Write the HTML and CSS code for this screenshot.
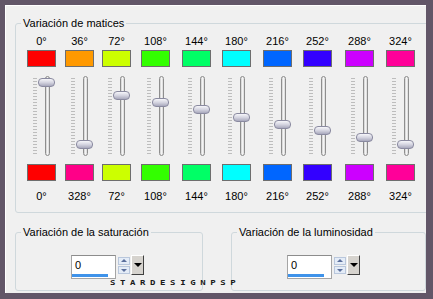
FILE: index.html
```html
<!DOCTYPE html>
<html lang="es">
<head>
  <meta charset="UTF-8">
  <title>Variación de matices</title>
  <link rel="stylesheet" href="styles.css">
</head>
<body>
  <div class="window">
    <fieldset class="group hue-group">
      <legend>Variación de matices</legend>
      <div class="hues">
        <div class="hue-col">
          <span class="deg">0°</span>
          <span class="swatch" style="background:#ff0000"></span>
          <div class="slider"><span class="track"></span><span class="thumb" style="top:4px"></span></div>
          <span class="swatch out" style="background:#ff0000"></span>
          <span class="deg out">0°</span>
        </div>
        <div class="hue-col">
          <span class="deg">36°</span>
          <span class="swatch" style="background:#ff9900"></span>
          <div class="slider"><span class="track"></span><span class="thumb" style="top:66px"></span></div>
          <span class="swatch out" style="background:#ff0088"></span>
          <span class="deg out">328°</span>
        </div>
        <div class="hue-col">
          <span class="deg">72°</span>
          <span class="swatch" style="background:#ccff00"></span>
          <div class="slider"><span class="track"></span><span class="thumb" style="top:17px"></span></div>
          <span class="swatch out" style="background:#ccff00"></span>
          <span class="deg out">72°</span>
        </div>
        <div class="hue-col">
          <span class="deg">108°</span>
          <span class="swatch" style="background:#33ff00"></span>
          <div class="slider"><span class="track"></span><span class="thumb" style="top:24px"></span></div>
          <span class="swatch out" style="background:#33ff00"></span>
          <span class="deg out">108°</span>
        </div>
        <div class="hue-col">
          <span class="deg">144°</span>
          <span class="swatch" style="background:#00ff66"></span>
          <div class="slider"><span class="track"></span><span class="thumb" style="top:31px"></span></div>
          <span class="swatch out" style="background:#00ff66"></span>
          <span class="deg out">144°</span>
        </div>
        <div class="hue-col">
          <span class="deg">180°</span>
          <span class="swatch" style="background:#00ffff"></span>
          <div class="slider"><span class="track"></span><span class="thumb" style="top:39px"></span></div>
          <span class="swatch out" style="background:#00ffff"></span>
          <span class="deg out">180°</span>
        </div>
        <div class="hue-col">
          <span class="deg">216°</span>
          <span class="swatch" style="background:#0066ff"></span>
          <div class="slider"><span class="track"></span><span class="thumb" style="top:46px"></span></div>
          <span class="swatch out" style="background:#0066ff"></span>
          <span class="deg out">216°</span>
        </div>
        <div class="hue-col">
          <span class="deg">252°</span>
          <span class="swatch" style="background:#3300ff"></span>
          <div class="slider"><span class="track"></span><span class="thumb" style="top:52px"></span></div>
          <span class="swatch out" style="background:#3300ff"></span>
          <span class="deg out">252°</span>
        </div>
        <div class="hue-col">
          <span class="deg">288°</span>
          <span class="swatch" style="background:#cc00ff"></span>
          <div class="slider"><span class="track"></span><span class="thumb" style="top:59px"></span></div>
          <span class="swatch out" style="background:#cc00ff"></span>
          <span class="deg out">288°</span>
        </div>
        <div class="hue-col">
          <span class="deg">324°</span>
          <span class="swatch" style="background:#ff0099"></span>
          <div class="slider"><span class="track"></span><span class="thumb" style="top:66px"></span></div>
          <span class="swatch out" style="background:#ff0099"></span>
          <span class="deg out">324°</span>
        </div>
      </div>
    </fieldset>

    <div class="lower">
      <fieldset class="group sat">
        <legend>Variación de la saturación</legend>
        <div class="spin">
          <div class="edit"><span class="val">0</span><span class="level"></span></div>
          <div class="updown"><span class="btn up"></span><span class="btn down"></span></div>
          <span class="drop"></span>
        </div>
      </fieldset>
      <fieldset class="group lum">
        <legend>Variación de la luminosidad</legend>
        <div class="spin">
          <div class="edit"><span class="val">0</span><span class="level"></span></div>
          <div class="updown"><span class="btn up"></span><span class="btn down"></span></div>
          <span class="drop"></span>
        </div>
      </fieldset>
    </div>

    <div class="mark">STARDESIGNPSP</div>
  </div>
</body>
</html>
```

FILE: styles.css
```css
* {
  box-sizing: border-box;
}

body {
  margin: 0;
  background: #625668;
  font-family: "Liberation Sans", Arial, sans-serif;
  font-size: 11px;
  color: #000;
}

.window {
  position: relative;
  width: 421px;
  height: 288px;
  margin: 5px 0 0 5px;
  padding: 12px 0 0 10px;
  background: #f0f0f0;
  box-shadow: inset 1px 1px 0 #fff;
  overflow: hidden;
}

.group {
  margin: 0;
  padding: 0;
  border: 1px solid #cfd8dc;
  border-radius: 3px;
}

.group legend {
  margin-left: 5px;
  padding: 0 2px;
  line-height: 13px;
}

.hue-group {
  width: 430px;
  padding-bottom: 9px;
}

.hues {
  display: grid;
  grid-template-columns: 38px 37px 39px 41px 40px 41px 40px 42px 41px 29px;
  margin: 5px 0 0 11px;
}

.hue-col {
  display: flex;
  flex-direction: column;
  align-items: center;
  width: 29px;
}

.deg {
  line-height: 13px;
  white-space: nowrap;
}

.deg.out {
  margin-top: 9px;
}

.swatch {
  display: block;
  width: 29px;
  height: 17px;
  margin-top: 2px;
  border: 1px solid #6e6e6e;
}

.swatch.out {
  margin-top: 6px;
}

/* vertical trackbar */
.slider {
  position: relative;
  width: 29px;
  height: 84px;
  margin-top: 7px;
}

.slider::before {
  content: "";
  position: absolute;
  left: 6px;
  top: 4px;
  width: 4px;
  height: 76px;
  background: repeating-linear-gradient(to bottom, #bdbdbd 0 1px, transparent 1px 3px);
}

.track {
  position: absolute;
  left: 18px;
  top: 2px;
  width: 5px;
  height: 80px;
  border: 1px solid #8e8e8e;
  border-radius: 3px;
  background: linear-gradient(to right, #cfcfcf, #f4f4f4 50%, #d8d8d8);
}

.thumb {
  position: absolute;
  left: 11px;
  width: 17px;
  height: 9px;
  border: 1px solid #8a8aa0;
  border-radius: 4px;
  background: linear-gradient(to bottom, #f6f6fa, #d4d4e0 50%, #a9a9bd);
}

.lower {
  display: flex;
  gap: 28px;
  margin-top: 13px;
}

.sat {
  width: 193px;
  height: 65px;
}

.lum {
  width: 200px;
  height: 65px;
}

.spin {
  display: flex;
  align-items: flex-start;
  margin: 16px 0 0 55px;
}

.edit {
  display: flex;
  flex-direction: column;
  width: 45px;
  height: 24px;
  border: 1px solid #a5a5a5;
  border-top-color: #8c8c8c;
  background: #fff;
}

.val {
  padding: 2px 3px 0;
  line-height: 14px;
}

.level {
  display: block;
  width: 36px;
  height: 3px;
  margin-top: auto;
  margin-bottom: 1px;
  background: #3f93ea;
}

.updown {
  display: flex;
  flex-direction: column;
  gap: 1px;
  width: 12px;
  margin: 2px 0 0 2px;
}

.btn {
  position: relative;
  display: block;
  height: 8px;
  border: 1px solid #b9c7dc;
  background: #e4ecf7;
}

.btn::after {
  content: "";
  position: absolute;
  left: 2px;
  border-left: 3px solid transparent;
  border-right: 3px solid transparent;
}

.btn.up::after {
  top: 1px;
  border-bottom: 3px solid #5b6f9c;
}

.btn.down::after {
  top: 2px;
  border-top: 3px solid #5b6f9c;
}

.drop {
  position: relative;
  display: block;
  width: 13px;
  height: 20px;
  margin-left: 1px;
  border: 1px solid;
  border-color: #fff #404040 #404040 #fff;
  background: #d6d3ce;
}

.drop::after {
  content: "";
  position: absolute;
  left: 2px;
  top: 7px;
  border-left: 4px solid transparent;
  border-right: 4px solid transparent;
  border-top: 4px solid #000;
}

/* watermark over the bottom groups */
.mark {
  position: absolute;
  left: 105px;
  top: 274px;
  font-family: "DejaVu Sans Mono", monospace;
  font-size: 9px;
  font-weight: bold;
  line-height: 9px;
  letter-spacing: 4.6px;
  color: #1a1a1a;
  transform: scaleY(0.8);
  transform-origin: left top;
}
```
